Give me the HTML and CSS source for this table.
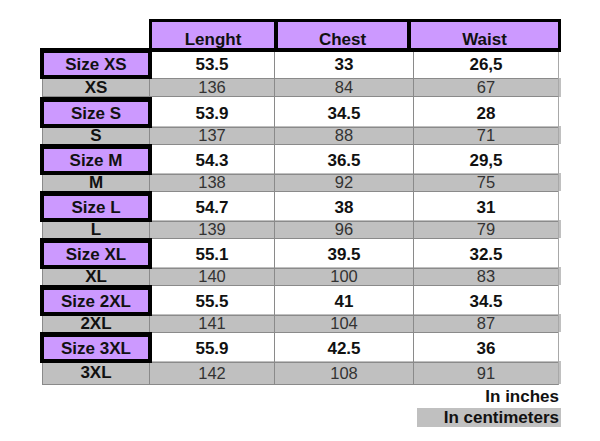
FILE: index.html
```html
<!DOCTYPE html>
<html>
<head>
<meta charset="utf-8">
<link rel="stylesheet" href="styles.css">
</head>
<body>
<div class="chart">
  <div class="head">
    <div class="hcell h1">Lenght</div>
    <div class="hcell h2">Chest</div>
    <div class="hcell h3">Waist</div>
  </div>
  <div class="body">
    <div class="row in first"><div class="lab">Size XS</div><div class="v">53.5</div><div class="v">33</div><div class="v last">26,5</div></div>
    <div class="row cm first"><div class="lab">XS</div><div class="v">136</div><div class="v">84</div><div class="v last">67</div></div>
    <div class="row in"><div class="lab">Size S</div><div class="v">53.9</div><div class="v">34.5</div><div class="v last">28</div></div>
    <div class="row cm"><div class="lab">S</div><div class="v">137</div><div class="v">88</div><div class="v last">71</div></div>
    <div class="row in"><div class="lab">Size M</div><div class="v">54.3</div><div class="v">36.5</div><div class="v last">29,5</div></div>
    <div class="row cm"><div class="lab">M</div><div class="v">138</div><div class="v">92</div><div class="v last">75</div></div>
    <div class="row in"><div class="lab">Size L</div><div class="v">54.7</div><div class="v">38</div><div class="v last">31</div></div>
    <div class="row cm"><div class="lab">L</div><div class="v">139</div><div class="v">96</div><div class="v last">79</div></div>
    <div class="row in"><div class="lab">Size XL</div><div class="v">55.1</div><div class="v">39.5</div><div class="v last">32.5</div></div>
    <div class="row cm"><div class="lab">XL</div><div class="v">140</div><div class="v">100</div><div class="v last">83</div></div>
    <div class="row in"><div class="lab">Size 2XL</div><div class="v">55.5</div><div class="v">41</div><div class="v last">34.5</div></div>
    <div class="row cm"><div class="lab">2XL</div><div class="v">141</div><div class="v">104</div><div class="v last">87</div></div>
    <div class="row in"><div class="lab">Size 3XL</div><div class="v">55.9</div><div class="v">42.5</div><div class="v last">36</div></div>
    <div class="row cm end"><div class="lab">3XL</div><div class="v">142</div><div class="v">108</div><div class="v last">91</div></div>
  </div>
  <div class="legend">
    <div class="leg-in">In inches</div>
    <div class="leg-cm">In centimeters</div>
  </div>
</div>
</body>
</html>
```

FILE: styles.css
```css
html, body {
  margin: 0;
  padding: 0;
  background: #fff;
}
body {
  width: 600px;
  height: 441px;
  overflow: hidden;
  font-family: "Liberation Sans", Arial, sans-serif;
  color: #111;
}
.chart {
  padding: 19px 0 0 40px;
  width: 521px;
}
.head {
  position: relative;
  z-index: 2;
  margin-left: 109px;
  width: 412px;
  height: 33px;
  box-sizing: border-box;
  border: 3px solid #000;
  border-bottom-width: 4px;
  display: flex;
  background: #cc99ff;
}
.hcell {
  font-weight: bold;
  font-size: 17px;
  text-align: center;
  line-height: 19px;
  padding-top: 8px;
  box-sizing: border-box;
}
.h1 { width: 122px; }
.h2 { width: 137px; border-left: 4px solid #000; border-right: 4px solid #000; }
.h3 { flex: 1; }

.body {
  margin-top: -4px;
}
.row {
  display: grid;
  grid-template-columns: 110px 125px 139px 145px;
  box-sizing: border-box;
}
.row .v {
  text-align: center;
  border-right: 1px solid #8a8a8a;
  border-bottom: 1px solid #8a8a8a;
  box-sizing: border-box;
}
.row .v.last {
  border-right: 1px solid #a8a8a8;
}
.row.in {
  height: 29px;
}
.row.in.first { height: 30px; }
.row.in .v {
  font-weight: bold;
  font-size: 17px;
  line-height: 26px;
  padding-top: 4px;
}
.row.in .lab {
  position: relative;
  z-index: 1;
  margin-right: -2px;
  background: #cc99ff;
  border: 4px solid #000;
  border-top-width: 5px;
  box-sizing: border-box;
  font-weight: bold;
  font-size: 17px;
  text-align: center;
  line-height: 20px;
  padding-top: 2px;
}
.row.cm {
  height: 18px;
  background: #c0c0c0;
  background-clip: content-box;
  padding-left: 2px;
  grid-template-columns: 108px 125px 139px 145px;
}
.row.cm.first { height: 19px; }
.row.cm.end { height: 23px; }
.row.cm .lab {
  border-left: 1px solid #8a8a8a;
  border-right: 1px solid #8a8a8a;
  border-bottom: 1px solid #8a8a8a;
  box-sizing: border-box;
  font-weight: bold;
  font-size: 17px;
  text-align: center;
  line-height: 17px;
  padding-top: 1px;
}
.row.cm .v {
  font-size: 16.5px;
  color: #333;
  line-height: 17px;
  padding-top: 1px;
}
.row.cm.end .lab, .row.cm.end .v {
  line-height: 22px;
}
.legend {
  margin-top: 3px;
  display: flex;
  flex-direction: column;
  align-items: flex-end;
  font-weight: bold;
  font-size: 17px;
}
.leg-in {
  line-height: 20px;
  padding-right: 2px;
}
.leg-cm {
  margin-top: 1px;
  width: 144px;
  box-sizing: border-box;
  background: #c0c0c0;
  text-align: right;
  line-height: 19px;
  padding-right: 2px;
}
```
